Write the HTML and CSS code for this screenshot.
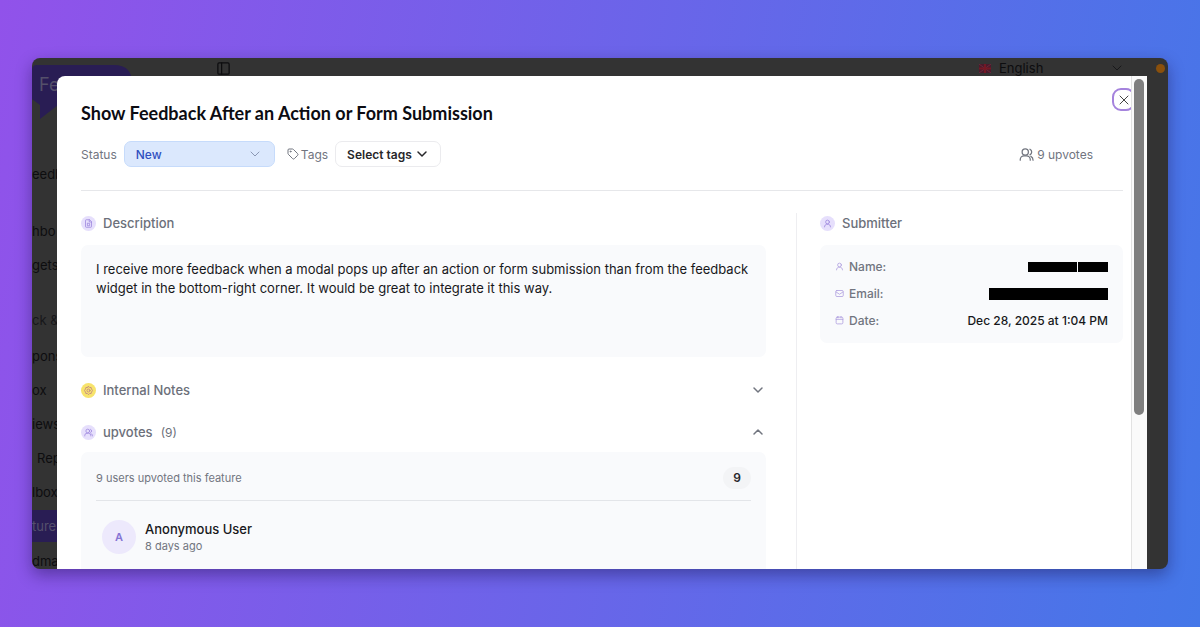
FILE: index.html
```html
<!DOCTYPE html>
<html lang="en">
<head>
<meta charset="utf-8">
<meta name="viewport" content="width=device-width, initial-scale=1">
<title>Show Feedback After an Action or Form Submission</title>
<link rel="stylesheet" href="styles.css">
</head>
<body>
<svg class="sprite" aria-hidden="true">
  <symbol id="down" viewBox="0 0 24 24"><path d="m4 8 8 8 8-8"/></symbol>
  <symbol id="up" viewBox="0 0 24 24"><path d="m4 16 8-8 8 8"/></symbol>
  <symbol id="users" viewBox="0 0 24 24"><circle cx="10" cy="8" r="5"/><path d="M2 21v-1a6 6 0 0 1 6-6h4a6 6 0 0 1 6 6v1M17.500 3.500a5 5 0 0 1 0 9M19 15c2 1 3.500 3 3.500 6"/></symbol>
  <symbol id="user" viewBox="0 0 24 24"><circle cx="12" cy="8" r="5"/><path d="M4 21c0-4 3-7 6-7h4c3 0 6 3 6 7"/></symbol>
  <symbol id="file" viewBox="0 0 24 24"><path d="M14 2H6a2 2 0 0 0-2 2v16a2 2 0 0 0 2 2h12a2 2 0 0 0 2-2V8zM14 2v6h6M9 12v6h6v-5z"/></symbol>
  <symbol id="gear" viewBox="0 0 24 24"><path d="m12 1 3 3h4l1 4 3 4-3 4-1 4h-4l-3 3-3-3H5l-1-4-3-4 3-4 1-4h4z"/><circle cx="12" cy="12" r="4"/></symbol>
  <symbol id="mail" viewBox="0 0 24 24"><rect x="2" y="4" width="20" height="16" rx="3"/><path d="m3 8 9 6 9-6"/></symbol>
  <symbol id="cal" viewBox="0 0 24 24"><rect x="3" y="3" width="18" height="18" rx="3"/><path d="M3 9h18M8 1v4M16 1v4"/></symbol>
</svg>
<main class="window">
  <div class="app" aria-hidden="true">
    <div class="topbar">
      <svg class="icon panel-icon" viewBox="0 0 24 24"><rect x="3" y="3" width="18" height="18" rx="2"/><path d="M9 3v18"/></svg>
      <span class="language">
        <svg class="flag" viewBox="0 0 12 9"><rect width="12" height="9" rx="1" fill="#4b1a2c"/><path d="M0 0l12 9M12 0 0 9" stroke="#6b2a3c"/><path d="M6 0v9M0 4.500h12" stroke="#741824" stroke-width="2"/></svg>
        English
        <svg class="icon language-arrow"><use href="#down"/></svg>
      </span>
      <span class="dot"></span>
    </div>
    <svg class="bubble" viewBox="0 0 100 54"><path d="M5 0h77q18 0 18 18v4q0 18-18 18H26L8 54V40L0 34V5q0-5 5-5z" fill="#291d54"/></svg>
    <span class="brand">Fe</span>
    <nav class="side">
      <span class="side-row workspace">eedb</span>
      <span class="side-row">hbo</span>
      <span class="side-row">gets</span>
      <span class="side-row side-group">ck &amp;</span>
      <span class="side-row">pons</span>
      <span class="side-row">ox</span>
      <span class="side-row">iews</span>
      <span class="side-row side-shift">Rep</span>
      <span class="side-row">lbox</span>
      <span class="side-row side-active">tures</span>
      <span class="side-row">dma</span>
    </nav>
  </div>

  <section class="modal" role="dialog" aria-labelledby="title">
    <div class="modal-body">
      <button class="close" type="button" aria-label="Close"><svg class="icon" viewBox="0 0 24 24"><path d="M4 4l16 16M20 4 4 20"/></svg></button>
      <header class="head">
        <h1 id="title">Show Feedback After an Action or Form Submission</h1>
        <div class="meta">
          <label for="status">Status</label>
          <span class="status">
            <select id="status"><option>New</option></select>
            <svg class="icon status-arrow"><use href="#down"/></svg>
          </span>
          <span class="tags"><svg class="icon" viewBox="0 0 24 24"><path d="M12.600 2.600A2 2 0 0 0 11.200 2H4a2 2 0 0 0-2 2v7.200a2 2 0 0 0 .6 1.400l8.700 8.700a2.400 2.400 0 0 0 3.400 0l6.600-6.600a2.400 2.400 0 0 0 0-3.400z"/><circle cx="7" cy="7" r="1"/></svg>Tags</span>
          <button class="select-tags" type="button">Select tags<svg class="icon"><use href="#down"/></svg></button>
          <span class="votes"><svg class="icon"><use href="#users"/></svg>9 upvotes</span>
        </div>
      </header>
      <div class="columns">
        <div class="details">
          <h2><span class="mark"><svg class="icon"><use href="#file"/></svg></span>Description</h2>
          <p class="card description">I receive more feedback when a modal pops up after an action or form submission than from the feedback widget in the bottom-right corner. It would be great to integrate it this way.</p>
          <h2 class="notes"><span class="mark mark-yellow"><svg class="icon"><use href="#gear"/></svg></span>Internal Notes
            <button class="toggle" type="button" aria-label="Expand internal notes"><svg class="icon"><use href="#down"/></svg></button></h2>
          <h2 class="upvotes"><span class="mark"><svg class="icon"><use href="#users"/></svg></span>upvotes <span class="count">(9)</span>
            <button class="toggle" type="button" aria-label="Collapse upvotes"><svg class="icon"><use href="#up"/></svg></button></h2>
          <div class="card voters">
            <div class="summary"><span>9 users upvoted this feature</span><span class="badge">9</span></div>
            <div class="voter">
              <span class="avatar">A</span>
              <div><div class="voter-name">Anonymous User</div><div class="voter-time">8 days ago</div></div>
            </div>
          </div>
        </div>
        <aside class="submitter">
          <h2><span class="mark"><svg class="icon"><use href="#user"/></svg></span>Submitter</h2>
          <dl class="card facts">
            <div><dt><svg class="icon"><use href="#user"/></svg>Name:</dt><dd class="redacted"><span class="bar bar-first"></span><span class="bar bar-last"></span></dd></div>
            <div><dt><svg class="icon"><use href="#mail"/></svg>Email:</dt><dd class="redacted"><span class="bar bar-email"></span></dd></div>
            <div><dt><svg class="icon"><use href="#cal"/></svg>Date:</dt><dd>Dec 28, 2025 at 1:04 PM</dd></div>
          </dl>
        </aside>
      </div>
    </div>
    <div class="scrollbar"><div class="thumb"></div></div>
  </section>
</main>
</body>
</html>
```
FILE: styles.css
```css
* { box-sizing: border-box; }

body {
  margin: 0;
  height: 100vh;
  padding: 58px 32px;
  display: flex;
  font-family: Inter, "Liberation Sans", sans-serif;
  font-size: 12px;
  color: #18181b;
  background: linear-gradient(100deg, #9152ea 0%, #4477e8 100%);
}

h1, h2, p, dl, dd { margin: 0; }
button, select { font: inherit; color: inherit; }
button { background: none; border: 0; padding: 0; }

.sprite { position: absolute; width: 0; height: 0; }

.icon {
  width: 12px;
  height: 12px;
  flex: none;
  fill: none;
  stroke: currentColor;
  stroke-width: 2;
  stroke-linecap: round;
  stroke-linejoin: round;
}

.window {
  position: relative;
  flex: 1;
  display: flex;
  overflow: hidden;
  border-radius: 8px;
  background: #333;
  box-shadow: 0 6px 16px rgba(20, 10, 60, 0.4);
}

/* Dimmed application behind the dialog */
.app { position: absolute; inset: 0; color: #0d0d0f; font-size: 13px; }

.topbar {
  display: flex;
  align-items: center;
  height: 20px;
  padding-left: 184px;
}
.panel-icon { width: 15px; height: 15px; }
.language { display: flex; align-items: center; gap: 8px; width: 144px; margin-left: auto; }
.flag { width: 12px; height: 9px; }
.language-arrow { margin-left: auto; color: #18181a; }
.dot { width: 9px; height: 9px; margin: 0 3px 0 33px; border-radius: 50%; background: #8a500c; }

.bubble { position: absolute; top: 7px; left: 0; width: 100px; height: 54px; }
.brand { position: absolute; top: 16px; left: 7px; font-size: 18px; color: #54506a; }

.side { position: absolute; top: 99px; left: 0; width: 160px; }
.side-row { display: flex; align-items: center; height: 34px; }
.workspace { margin-bottom: 23px; }
.side-group { height: 36px; margin: 20px 0 1px; color: #17171a; }
.side-shift { padding-left: 5px; }
.side-active { height: 32px; margin: 1px 0 2px; background: #291d54; color: #55506c; }

/* Dialog */
.modal {
  position: relative;
  flex: 1;
  min-width: 0;
  display: flex;
  margin: 18px 21px 0 25px;
  overflow: hidden;
  border-top-left-radius: 8px;
  background: #fff;
}
.modal-body { position: relative; flex: 1; min-width: 0; padding: 24px 8px 0 24px; overflow: hidden; }

.scrollbar { width: 16px; padding: 3px 3px 3px 2px; border-left: 1px solid #e2e2e2; background: #fafafa; }
.thumb { height: 69%; border-radius: 6px; background: #7f7f7f; }

.close {
  position: absolute;
  top: 12px;
  right: -4px;
  width: 23px;
  height: 23px;
  display: grid;
  place-items: center;
  border: 2px solid #a583dd;
  border-radius: 9px;
  color: #444;
}

.head { padding-bottom: 23px; border-bottom: 1px solid #e6e7ea; }
h1 {
  font-family: Lato, "Liberation Sans", sans-serif;
  font-size: 18px;
  line-height: 26px;
  font-weight: 700;
  color: #0c0c12;
}
.meta { display: flex; align-items: center; margin-top: 15px; color: #71757f; }
.status { position: relative; display: flex; margin: 0 12px 0 7px; }
.status select {
  appearance: none;
  width: 151px;
  height: 26px;
  padding: 0 11px;
  border: 1px solid #c6dbfb;
  border-radius: 7px;
  background: #dbe8fd;
  color: #2f4fc0;
  font-size: 12px;
  font-weight: 500;
}
.status-arrow { position: absolute; top: 7px; right: 14px; color: #8b98b4; pointer-events: none; }
.tags { display: flex; align-items: center; gap: 2px; }
.select-tags {
  display: flex;
  align-items: center;
  gap: 4px;
  height: 26px;
  margin-left: 7px;
  padding: 0 12px 0 11px;
  border: 1px solid #ebebee;
  border-radius: 7px;
  font-weight: 600;
  color: #27272a;
}
.select-tags .icon { stroke-width: 3; }
.votes { display: flex; align-items: center; gap: 3px; margin: 0 30px 0 auto; }
.votes .icon { width: 15px; height: 15px; }

.columns { display: grid; grid-template-columns: minmax(0, 1fr) 327px; gap: 30px; padding-top: 22px; }
.submitter { min-height: 400px; padding-left: 23px; border-left: 1px solid #eeeef1; }

h2 {
  display: flex;
  align-items: center;
  height: 20px;
  font-size: 13px;
  font-weight: 500;
  color: #6c707a;
}
.mark {
  display: grid;
  place-items: center;
  width: 15px;
  height: 15px;
  margin-right: 7px;
  border-radius: 50%;
  background: #e6dffc;
  color: #9a83dc;
}
.mark .icon { width: 9px; height: 9px; }
.mark-yellow { background: #f7e36c; color: #b9798a; }
.count { margin-left: 8px; font-size: 12px; font-weight: 400; }
.toggle { display: flex; margin: 0 2px 0 auto; color: #71757f; }
.toggle .icon { stroke-width: 3; }

.card { border-radius: 7px; background: #f9fafc; }
.description { min-height: 112px; margin-top: 12px; padding: 15px; font-size: 13px; line-height: 19px; }
.notes { margin-top: 23px; }
.upvotes { margin-top: 22px; }

.voters { margin-top: 10px; padding: 15px 15px 30px; }
.summary {
  display: flex;
  align-items: center;
  justify-content: space-between;
  padding-bottom: 11px;
  border-bottom: 1px solid #e3e5e9;
  color: #71757f;
  font-size: 11px;
}
.badge { padding: 3px 10px; border-radius: 11px; background: #f3f4f6; color: #27272a; font-size: 12px; font-weight: 600; line-height: 16px; }
.voter { display: flex; align-items: center; gap: 9px; padding: 19px 6px; }
.avatar {
  display: grid;
  place-items: center;
  width: 34px;
  height: 34px;
  border-radius: 50%;
  background: #ede9fc;
  color: #8574d4;
  font-size: 11px;
  font-weight: 600;
}
.voter-name { font-size: 13px; line-height: 18px; font-weight: 500; }
.voter-time { font-size: 11px; line-height: 16px; color: #71757f; }

.facts { margin-top: 12px; padding: 8px 15px 9px; }
.facts > div { display: flex; align-items: center; justify-content: space-between; height: 27px; }
.facts dt { display: flex; align-items: center; gap: 5px; font-weight: 500; color: #71757f; }
.facts dt .icon { width: 9px; height: 9px; color: #ab9ade; }
.facts dd { font-weight: 500; }
.redacted { display: flex; gap: 1px; }
.bar { height: 10px; background: #000; }
.bar-first { width: 49px; }
.bar-last { width: 30px; }
.bar-email { width: 119px; height: 12px; }
```
